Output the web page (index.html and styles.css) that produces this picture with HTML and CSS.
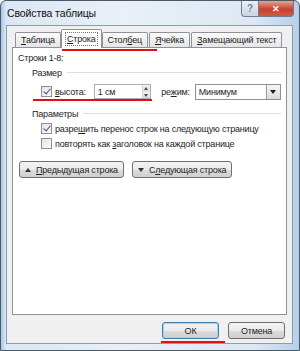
FILE: index.html
```html
<!DOCTYPE html>
<html lang="ru">
<head>
    <meta charset="UTF-8">
    <title>Свойства таблицы</title>
    <link rel="stylesheet" href="styles.css">
</head>
<body>
    <div class="window">
        <!-- заголовок окна -->
        <div class="titlebar">
            <span class="title">Свойства таблицы</span>
            <div class="caption-buttons">
                <span class="cap-btn help">?</span>
                <span class="cap-btn close">&#x2715;</span>
            </div>
        </div>

        <div class="client">
            <div class="tabs">
                <span class="tab"><span><u>Т</u>аблица</span></span>
                <span class="tab active"><span><u>С</u>трока</span></span>
                <span class="tab"><span>Стол<u>б</u>ец</span></span>
                <span class="tab"><span><u>Я</u>чейка</span></span>
                <span class="tab"><span><u>З</u>амещающий текст</span></span>
                <span class="mark mark-tabs"></span>
            </div>

            <div class="panel">
                <div class="caption">Строки 1-8:</div>

                <div class="group-title">Размер <span class="rule"></span></div>
                <div class="size-row">
                    <label class="check-label"><span class="check checked"></span><span><u>в</u>ысота:</span></label>
                    <span class="spin-input">
                        <span class="spin-text">1 см</span>
                        <span class="spin-btns"><span class="spin-up"></span><span class="spin-down"></span></span>
                    </span>
                    <span class="mode-label">ре<u>ж</u>им:</span>
                    <span class="select">
                        <span class="select-text">Минимум</span>
                        <span class="select-btn"></span>
                    </span>
                    <span class="mark mark-height"></span>
                </div>

                <div class="group-title">Параметры <span class="rule"></span></div>
                <div class="options">
                    <label class="check-label"><span class="check checked"></span><span>разре<u>ш</u>ить перенос строк на следующую страницу</span></label>
                    <label class="check-label"><span class="check"></span><span>повторять как <u>з</u>аголовок на каждой странице</span></label>
                </div>

                <div class="nav-row">
                    <span class="btn nav-btn"><span class="tri up"></span><span><u>П</u>редыдущая строка</span></span>
                    <span class="btn nav-btn"><span class="tri down"></span><span>С<u>л</u>едующая строка</span></span>
                </div>
            </div>

            <div class="footer">
                <span class="btn dlg-btn default">ОК<span class="mark mark-ok"></span></span>
                <span class="btn dlg-btn">Отмена</span>
            </div>
        </div>
    </div>
</body>
</html>
```

FILE: styles.css
```css
* {
    box-sizing: border-box;
}

body {
    margin: 0;
    font-family: "Liberation Sans", Arial, sans-serif;
    font-size: 9px;
    letter-spacing: -0.2px;
    color: #1e1e1e;
    background: #ffffff;
}

u {
    text-decoration-thickness: 1px;
    text-underline-offset: 1px;
}

/* рамка окна в стиле Windows 7 */
.window {
    width: 300px;
    height: 351px;
    border: 1px solid #4b5866;
    border-radius: 6px 6px 0 0;
    background: linear-gradient(90deg, #a9c6e6 0, #dbe7f4 5px, #e9f0f7 40%, #dde8f3 85%, #b6cfea 100%);
    display: flex;
    flex-direction: column;
    padding: 0 6px 6px 5px;
}

.titlebar {
    height: 24px;
    display: flex;
    align-items: flex-start;
}

.title {
    font-size: 10.5px;
    letter-spacing: -0.1px;
    color: #111;
    margin-top: 6px;
    margin-left: 1px;
}

.caption-buttons {
    margin-left: auto;
    margin-right: -1px;
    display: flex;
}

.cap-btn {
    height: 16px;
    display: flex;
    align-items: center;
    justify-content: center;
    border: 1px solid #6d7c8f;
    border-top: none;
    font-weight: bold;
    color: #ffffff;
    letter-spacing: 0;
}

.help {
    width: 18px;
    border-radius: 0 0 0 4px;
    background: linear-gradient(#e9eef4, #c9d5e2);
    color: #6f7f92;
    font-size: 10px;
    text-shadow: 0 0 1px #ffffff;
}

.close {
    width: 35px;
    border-left: none;
    border-radius: 0 0 4px 0;
    background: linear-gradient(#e3a495, #c7432e 55%, #d15a44);
    font-size: 9px;
}

.client {
    flex: 1;
    background: #f0f0f0;
    border: 1px solid #8c9bb0;
    display: flex;
    flex-direction: column;
    padding: 3px 5px 4px 5px;
}

/* вкладки */
.tabs {
    display: flex;
    align-items: flex-end;
    height: 18px;
    padding-left: 3px;
    position: relative;
    z-index: 1;
}

.tab {
    height: 15px;
    padding: 0 5px;
    margin-right: 1px;
    border: 1px solid #8e939b;
    border-bottom: none;
    border-radius: 2px 2px 0 0;
    background: linear-gradient(#fbfbfb, #e5e5e5);
    display: flex;
    align-items: center;
    white-space: nowrap;
}

.tab.active {
    height: 19px;
    margin: 0 0 -1px -1px;
    padding: 0 5px;
    background: #ffffff;
}

.tab.active span {
    outline: 1px dotted #777;
    outline-offset: 1px;
}

.panel {
    background: #ffffff;
    border: 1px solid #8e939b;
    height: 268px;
    padding: 5px 5px 0 5px;
}

.caption {
    height: 13px;
}

.group-title {
    display: flex;
    align-items: center;
    margin: 0 0 0 14px;
    height: 13px;
}

.rule {
    flex: 1;
    height: 1px;
    background: #dcdcdc;
    margin-left: 5px;
}

.size-row {
    display: flex;
    align-items: center;
    height: 21px;
    margin: 2px 0 5px 23px;
    position: relative;
}

.check-label {
    display: flex;
    align-items: center;
    white-space: nowrap;
}

.check {
    flex-shrink: 0;
    width: 11px;
    height: 11px;
    border: 1px solid #8f8f8f;
    background: linear-gradient(135deg, #e4e4e4, #fbfbfb);
    margin-right: 3px;
    position: relative;
}

.check.checked::after {
    content: "";
    position: absolute;
    left: 3px;
    top: 0;
    width: 3px;
    height: 6px;
    border: solid #3b4e83;
    border-width: 0 1.5px 1.5px 0;
    transform: rotate(40deg);
}

.spin-input {
    width: 58px;
    height: 15px;
    margin-left: 8px;
    border: 1px solid #abadb3;
    display: flex;
    align-items: center;
}

.spin-text {
    flex: 1;
    padding-left: 3px;
}

.spin-btns {
    width: 8px;
    height: 100%;
    display: flex;
    flex-direction: column;
    border-left: 1px solid #d5d5d5;
}

.spin-up,
.spin-down {
    flex: 1;
    background: linear-gradient(#f4f4f4, #dddddd);
    position: relative;
}

.spin-up::after,
.spin-down::after {
    content: "";
    position: absolute;
    left: 1px;
    top: 2px;
    border-left: 2.5px solid transparent;
    border-right: 2.5px solid transparent;
}

.spin-up::after {
    border-bottom: 3px solid #4a4a4a;
}

.spin-down::after {
    border-top: 3px solid #4a4a4a;
}

.mode-label {
    margin-left: 10px;
}

.select {
    width: 87px;
    height: 16px;
    margin-left: 5px;
    border: 1px solid #8f8f8f;
    display: flex;
    align-items: center;
}

.select-text {
    flex: 1;
    padding-left: 3px;
}

.select-btn {
    width: 14px;
    height: 100%;
    border-left: 1px solid #9a9a9a;
    background: linear-gradient(#f6f6f6, #dadada);
    position: relative;
}

.select-btn::after {
    content: "";
    position: absolute;
    left: 3px;
    top: 5px;
    border-left: 3.5px solid transparent;
    border-right: 3.5px solid transparent;
    border-top: 4px solid #1e1e1e;
}

.options {
    display: flex;
    flex-direction: column;
    gap: 4px;
    margin: 3px 0 0 23px;
}

.nav-row {
    display: flex;
    gap: 8px;
    margin-top: 12px;
    margin-left: 1px;
}

.btn {
    height: 17px;
    border: 1px solid #707070;
    border-radius: 3px;
    background: linear-gradient(#f2f2f2 0, #ebebeb 50%, #dddddd 51%, #cfcfcf 100%);
    display: flex;
    align-items: center;
    justify-content: center;
    white-space: nowrap;
}

.nav-btn {
    padding: 0 5px 0 5px;
}

.tri {
    margin-right: 5px;
    border-left: 3.5px solid transparent;
    border-right: 3.5px solid transparent;
}

.tri.up {
    border-bottom: 4px solid #333;
}

.tri.down {
    border-top: 4px solid #333;
}

.footer {
    display: flex;
    justify-content: flex-end;
    gap: 9px;
    margin-top: auto;
    padding-right: 2px;
}

.dlg-btn {
    width: 57px;
    position: relative;
}

.dlg-btn.default {
    border-color: #3c7fb1;
    box-shadow: inset 0 0 0 1px #9fd6f4;
}

/* красные пометки поверх скриншота */
.mark {
    position: absolute;
    height: 2px;
    background: #e30d17;
}

.mark-tabs {
    left: 50px;
    width: 95px;
    top: 20px;
}

.mark-height {
    left: -8px;
    width: 119px;
    top: 18px;
}

.mark-ok {
    left: -2px;
    width: 64px;
    top: 18px;
}
```
